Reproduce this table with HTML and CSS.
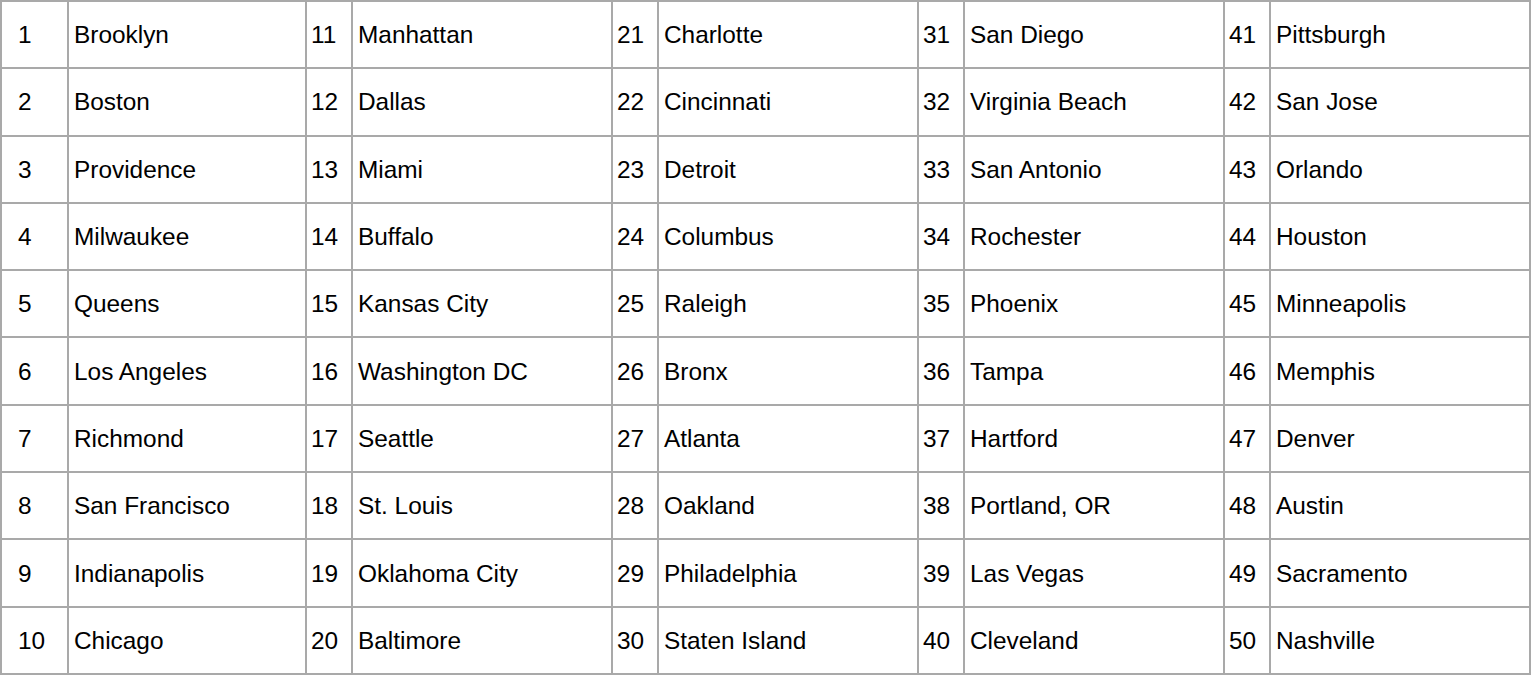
FILE: index.html
```html
<!DOCTYPE html>
<html>
<head>
<meta charset="utf-8">
<link rel="stylesheet" href="styles.css">
</head>
<body>
<table class="cities">
<colgroup>
<col class="c-num1"><col class="c-name1">
<col class="c-num"><col class="c-name">
<col class="c-num"><col class="c-name">
<col class="c-num"><col class="c-name">
<col class="c-num"><col class="c-name">
</colgroup>
<tbody>
<tr><td class="num first">1</td><td>Brooklyn</td><td class="num">11</td><td>Manhattan</td><td class="num">21</td><td>Charlotte</td><td class="num">31</td><td>San Diego</td><td class="num">41</td><td>Pittsburgh</td></tr>
<tr><td class="num first">2</td><td>Boston</td><td class="num">12</td><td>Dallas</td><td class="num">22</td><td>Cincinnati</td><td class="num">32</td><td>Virginia Beach</td><td class="num">42</td><td>San Jose</td></tr>
<tr><td class="num first">3</td><td>Providence</td><td class="num">13</td><td>Miami</td><td class="num">23</td><td>Detroit</td><td class="num">33</td><td>San Antonio</td><td class="num">43</td><td>Orlando</td></tr>
<tr><td class="num first">4</td><td>Milwaukee</td><td class="num">14</td><td>Buffalo</td><td class="num">24</td><td>Columbus</td><td class="num">34</td><td>Rochester</td><td class="num">44</td><td>Houston</td></tr>
<tr><td class="num first">5</td><td>Queens</td><td class="num">15</td><td>Kansas City</td><td class="num">25</td><td>Raleigh</td><td class="num">35</td><td>Phoenix</td><td class="num">45</td><td>Minneapolis</td></tr>
<tr><td class="num first">6</td><td>Los Angeles</td><td class="num">16</td><td>Washington DC</td><td class="num">26</td><td>Bronx</td><td class="num">36</td><td>Tampa</td><td class="num">46</td><td>Memphis</td></tr>
<tr><td class="num first">7</td><td>Richmond</td><td class="num">17</td><td>Seattle</td><td class="num">27</td><td>Atlanta</td><td class="num">37</td><td>Hartford</td><td class="num">47</td><td>Denver</td></tr>
<tr><td class="num first">8</td><td>San Francisco</td><td class="num">18</td><td>St. Louis</td><td class="num">28</td><td>Oakland</td><td class="num">38</td><td>Portland, OR</td><td class="num">48</td><td>Austin</td></tr>
<tr><td class="num first">9</td><td>Indianapolis</td><td class="num">19</td><td>Oklahoma City</td><td class="num">29</td><td>Philadelphia</td><td class="num">39</td><td>Las Vegas</td><td class="num">49</td><td>Sacramento</td></tr>
<tr><td class="num first">10</td><td>Chicago</td><td class="num">20</td><td>Baltimore</td><td class="num">30</td><td>Staten Island</td><td class="num">40</td><td>Cleveland</td><td class="num">50</td><td>Nashville</td></tr>
</tbody>
</table>
</body>
</html>
```
FILE: styles.css
```css
html, body {
  margin: 0;
  padding: 0;
  background: #ffffff;
}

.cities {
  border-collapse: collapse;
  table-layout: fixed;
  width: 1529px;
  font-family: "Liberation Sans", Arial, sans-serif;
  font-size: 24.4px;
  color: #000000;
}

.c-num1 { width: 67px; }
.c-name1 { width: 238px; }
.c-num { width: 46px; }
.c-name { width: 260px; }

.cities tr {
  height: 67.3px;
}

.cities td {
  border: 2px solid #a9a9a9;
  padding: 1px 0 0 5px;
  vertical-align: middle;
  white-space: nowrap;
  overflow: hidden;
}

.cities td.num {
  padding-left: 4px;
}

.cities td.first {
  padding-left: 16px;
}
```
